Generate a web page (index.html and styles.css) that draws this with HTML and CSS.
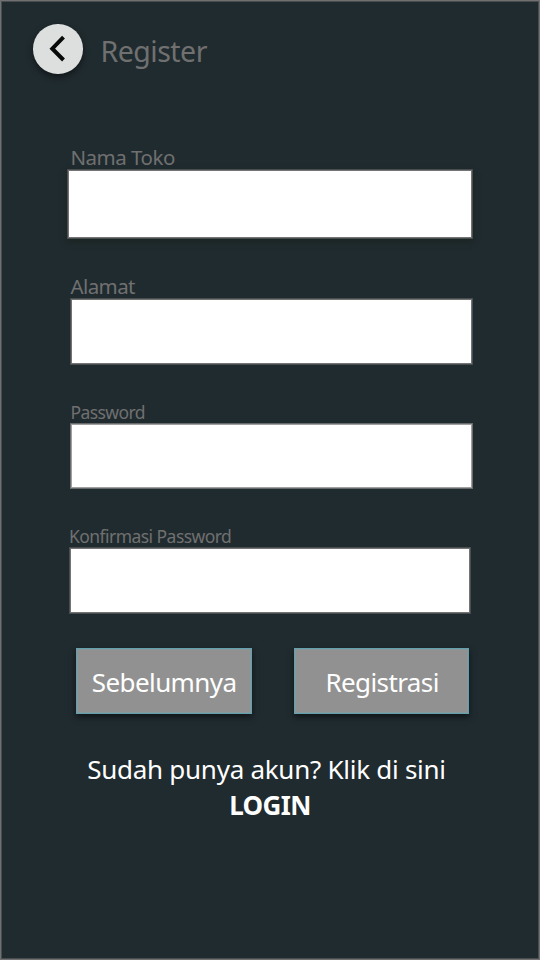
FILE: index.html
```html
<!DOCTYPE html>
<html lang="id">
<head>
<meta charset="utf-8">
<title>Register</title>
<link rel="stylesheet" href="styles.css">
</head>
<body>
<main class="screen">
  <header class="header">
    <button class="back" type="button" aria-label="Kembali">
      <svg width="50" height="50" viewBox="0 0 50 50"><path d="M30.5 13.2 L19.3 24.7 L30.5 36" fill="none" stroke="#080a0a" stroke-width="4"/></svg>
    </button>
    <h1 class="title">Register</h1>
  </header>
  <form class="form">
    <div class="field store">
      <label class="label" for="store">Nama Toko</label>
      <input class="input" id="store" type="text">
    </div>
    <div class="field address">
      <label class="label" for="address">Alamat</label>
      <input class="input" id="address" type="text">
    </div>
    <div class="field password">
      <label class="label" for="password">Password</label>
      <input class="input" id="password" type="password">
    </div>
    <div class="field confirm">
      <label class="label" for="confirm">Konfirmasi Password</label>
      <input class="input" id="confirm" type="password">
    </div>
    <div class="actions">
      <button class="button previous" type="button">Sebelumnya</button>
      <button class="button submit" type="button">Registrasi</button>
    </div>
  </form>
  <footer class="footer">
    <p class="question">Sudah punya akun? Klik di sini</p>
    <a class="login">LOGIN</a>
  </footer>
</main>
</body>
</html>
```
FILE: styles.css
```css
* {
  box-sizing: border-box;
}

body {
  margin: 0;
  font-family: "Noto Sans", "Open Sans", sans-serif;
}

.screen {
  display: flex;
  flex-direction: column;
  width: 540px;
  height: 960px;
  border: 1px solid #707070;
  background: #202b2f;
  box-shadow: inset 0 0 0 1px #484e50;
}

.header {
  display: flex;
  height: 143px;
  padding: 23px 0 0 32px;
}

.back {
  width: 49.5px;
  height: 49.5px;
  padding: 0;
  border: 0;
  border-radius: 50%;
  background: #dddfde;
  box-shadow: 0 3px 6px rgba(0, 0, 0, 0.5);
}

.back svg {
  display: block;
}

.title {
  margin: 7px 0 0 18px;
  color: #707070;
  font-size: 28.5px;
  font-weight: 400;
  line-height: 41px;
  letter-spacing: -0.5px;
}

.form {
  display: flex;
  flex-direction: column;
}

.field {
  display: flex;
  flex-direction: column;
  width: 403px;
  margin-left: 69px;
}

.label {
  height: 25px;
  padding-left: 0.5px;
  color: #707070;
  font-size: 17.5px;
  line-height: 28px;
  letter-spacing: -0.6px;
  white-space: nowrap;
}

.input {
  width: 100%;
  height: 67px;
  padding: 0 12px;
  border: 1px solid #484e50;
  border-radius: 0;
  background: #fff;
  box-shadow: inset 0 0 0 1px #747474;
  font: inherit;
  outline: none;
}

.store {
  width: 406px;
  height: 129px;
  margin-left: 66px;
}

.store .label {
  padding-left: 3.5px;
  font-size: 20.5px;
  line-height: 27px;
  letter-spacing: -0.5px;
}

.store .input {
  height: 70px;
  box-shadow: inset 0 0 0 1px #747474, 0 3px 6px rgba(22, 30, 20, 0.5);
}

.address {
  height: 125px;
}

.address .label {
  font-size: 20.5px;
  line-height: 27px;
}

.password {
  height: 124px;
}

.password .input {
  height: 66px;
  border-color: #686b6c;
  box-shadow: inset 0 0 0 1px #a0a0a0;
}

.confirm {
  width: 402px;
  margin-left: 68px;
}

.confirm .label {
  padding-left: 0;
  letter-spacing: -0.55px;
}

.actions {
  display: flex;
  gap: 42px;
  margin: 34px 0 0 75.4px;
}

.button {
  width: 175.5px;
  height: 66px;
  padding: 2px 0 0;
  border: 1px solid #62a0ad;
  background: #919191;
  box-shadow: inset 0 0 0 1px #87979a, 0 3px 6px rgba(0, 0, 0, 0.55);
  color: #fff;
  font: 26px/62px "Noto Sans", "Open Sans", sans-serif;
  letter-spacing: -0.6px;
  white-space: nowrap;
}

.submit {
  padding-left: 1px;
}

.footer {
  display: flex;
  flex-direction: column;
  align-items: center;
  margin-top: 38px;
  padding-right: 7px;
  color: #fff;
  font-size: 26px;
  line-height: 35px;
  white-space: nowrap;
}

.question {
  margin: 0 0 1px;
  letter-spacing: -0.27px;
}

.login {
  padding-left: 7px;
  font-weight: 700;
  letter-spacing: -0.6px;
}
```
